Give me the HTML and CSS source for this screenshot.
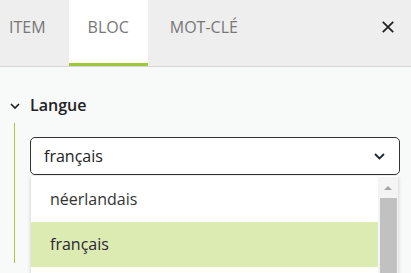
FILE: index.html
```html
<!DOCTYPE html>
<html lang="fr">
<head>
<meta charset="utf-8">
<link rel="stylesheet" href="styles.css">
</head>
<body>
<div class="header">
  <div class="tab tab-first">ITEM</div>
  <div class="tab active">BLOC</div>
  <div class="tab tab-third">MOT-CLÉ</div>
  <div class="spacer"></div>
  <div class="close">
    <svg width="12" height="12" viewBox="0 0 12 12"><path d="M0.8 0.8 L11.2 11.2 M11.2 0.8 L0.8 11.2" stroke="#222" stroke-width="1.8" fill="none"/></svg>
  </div>
</div>
<div class="content">
  <div class="section-title">
    <svg class="chev" width="10" height="7" viewBox="0 0 10 7"><path d="M1 1 L5 5 L9 1" stroke="#222" stroke-width="1.7" fill="none"/></svg>
    <span>Langue</span>
  </div>
  <div class="section-body">
    <div class="select-wrap">
      <div class="select">
        <span>français</span>
        <svg width="11" height="7" viewBox="0 0 11 7"><path d="M1 1 L5.5 5.5 L10 1" stroke="#1b2838" stroke-width="1.8" fill="none"/></svg>
      </div>
      <div class="dropdown">
        <div class="options">
          <div class="option">néerlandais</div>
          <div class="option selected">français</div>
          <div class="option"></div>
        </div>
        <div class="scrollbar">
          <div class="arrow"></div>
          <div class="thumb"></div>
        </div>
      </div>
    </div>
  </div>
</div>
</body>
</html>
```
FILE: styles.css
```css
html, body {
  margin: 0;
  padding: 0;
  height: 273px;
  overflow: hidden;
}
body {
  background: #f8f9f9;
  font-family: "Open Sans", "Noto Sans", sans-serif;
}
.header {
  display: flex;
  height: 66px;
  background: #eeeeee;
  border-bottom: 1px solid #d6d6d6;
}
.tab {
  box-sizing: border-box;
  height: 66px;
  padding: 16px 20px 0;
  font-size: 16px;
  line-height: 22px;
  color: #777777;
  border-bottom: 3px solid transparent;
}
.tab-first {
  padding-left: 9px;
  padding-right: 23px;
}
.tab.active {
  background: #ffffff;
  border-bottom-color: #9fc73a;
  padding-left: 19px;
  padding-right: 19px;
}
.tab-third {
  padding-left: 22px;
}
.spacer {
  flex: 1;
}
.close {
  padding: 21px 17px 0 0;
}
.close svg {
  display: block;
}
.content {
  padding: 27px 0 0 10px;
}
.section-title {
  display: flex;
  align-items: center;
  gap: 10px;
  height: 22px;
  font-size: 16px;
  font-weight: 600;
  line-height: 22px;
  color: #222222;
}
.chev {
  display: block;
  margin-top: 2px;
}
.section-body {
  margin: 7px 0 0 4px;
  border-left: 1px solid #a8c93a;
  height: 126px;
  padding: 14px 11px 0 15px;
}
.select-wrap {
  position: relative;
}
.select {
  box-sizing: border-box;
  height: 38px;
  border: 1px solid #333333;
  border-radius: 5px;
  background: #ffffff;
  display: flex;
  align-items: center;
  justify-content: space-between;
  padding: 0 14px 0 13px;
  font-size: 16px;
  color: #222222;
}
.select svg {
  display: block;
}
.dropdown {
  position: absolute;
  top: 39px;
  left: 1px;
  right: 2px;
  height: 200px;
  background: #ffffff;
  box-shadow: 0 1px 4px rgba(0, 0, 0, 0.2);
  display: flex;
  padding-top: 1px;
}
.options {
  flex: 1;
}
.option {
  height: 45px;
  line-height: 45px;
  padding-left: 19px;
  font-size: 16px;
  color: #333333;
}
.option.selected {
  background: #dbebb1;
  color: #2e2536;
}
.scrollbar {
  width: 20px;
  background: #f4f4f4;
  display: flex;
  flex-direction: column;
  align-items: center;
}
.arrow {
  margin-top: 9px;
  width: 0;
  height: 0;
  border-left: 4.5px solid transparent;
  border-right: 4.5px solid transparent;
  border-bottom: 4px solid #a3a3a3;
}
.thumb {
  margin-top: 8px;
  width: 17px;
  height: 120px;
  background: #c1c1c1;
}
```
